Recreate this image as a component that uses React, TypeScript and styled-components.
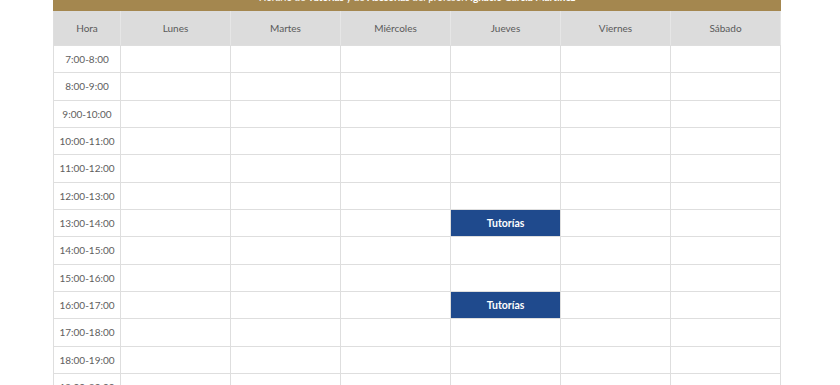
import React from "react";
import styled, { createGlobalStyle } from "styled-components";

const Global = createGlobalStyle`
  html, body { margin: 0; padding: 0; background: #ffffff; }
  body { font-family: Lato, "Open Sans", sans-serif; overflow: hidden; }
`;

const Page = styled.div`
  padding-left: 53px;
`;

const Wrapper = styled.div`
  width: 728px;
`;

const TitleBar = styled.div`
  height: 11px;
  background: #a4874f;
  overflow: hidden;
  display: flex;
  justify-content: center;
`;

const Title = styled.div`
  color: #ffffff;
  font-size: 10px;
  line-height: 10px;
  margin-top: -8px;
  white-space: nowrap;
  b { font-weight: 700; }
`;

const Grid = styled.div`
  display: grid;
  grid-template-columns: 66px repeat(6, 109px);
  grid-template-rows: 34px;
  grid-auto-rows: 26.33px;
  gap: 1px;
  padding: 0 1px 1px 1px;
  background: #dedede;
`;

const HeadCell = styled.div`
  background: #dcdcdc;
  box-shadow: 1px 0 0 #e6e6e6;
  display: flex;
  align-items: center;
  justify-content: center;
  font-size: 10px;
  color: #5a5a5a;
`;

const Cell = styled.div<{ $busy?: boolean }>`
  background: ${(p) => (p.$busy ? "#1f4a8d" : "#ffffff")};
  color: ${(p) => (p.$busy ? "#ffffff" : "#5e5e5e")};
  font-weight: ${(p) => (p.$busy ? 700 : 400)};
  font-size: ${(p) => (p.$busy ? "10.5px" : "10px")};
  display: flex;
  align-items: center;
  justify-content: center;
  white-space: nowrap;
`;

const days = ["Lunes", "Martes", "Miércoles", "Jueves", "Viernes", "Sábado"];
const hours = Array.from({ length: 14 }, (_, i) => `${7 + i}:00-${8 + i}:00`);
const busy: Record<string, string> = {
  "13:00-14:00|Jueves": "Tutorías",
  "16:00-17:00|Jueves": "Tutorías",
};

export default function App() {
  return (
    <Page>
      <Global />
      <Wrapper>
        <TitleBar>
          <Title>
            Horario de <b>Tutorías</b> y de <b>Asesorías</b> del profesor: <b>Ignacio García Martínez</b>
          </Title>
        </TitleBar>
        <Grid>
          <HeadCell>Hora</HeadCell>
          {days.map((d) => (
            <HeadCell key={d}>{d}</HeadCell>
          ))}
          {hours.map((h) => (
            <React.Fragment key={h}>
              <Cell>{h}</Cell>
              {days.map((d) => {
                const v = busy[`${h}|${d}`];
                return (
                  <Cell key={d} $busy={!!v}>
                    {v}
                  </Cell>
                );
              })}
            </React.Fragment>
          ))}
        </Grid>
      </Wrapper>
    </Page>
  );
}
